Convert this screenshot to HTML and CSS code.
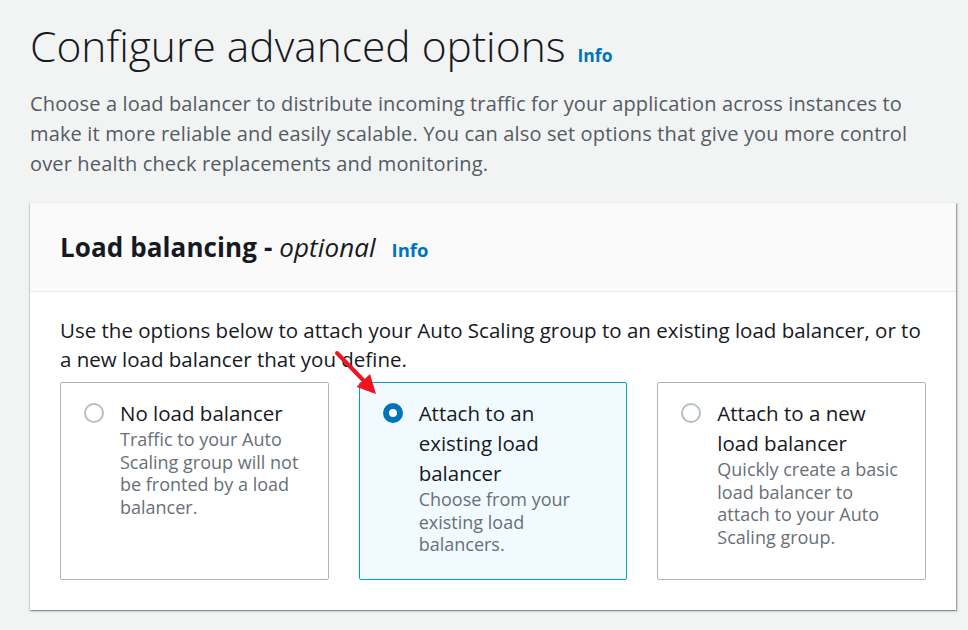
FILE: index.html
```html
<!DOCTYPE html>
<html>
<head>
<meta charset="utf-8">
<link rel="stylesheet" href="styles.css">
</head>
<body>
<div class="page">
  <h1 class="title">Configure advanced options <a class="info info-lg">Info</a></h1>
  <p class="lead">Choose a load balancer to distribute incoming traffic for your application across instances to make it more reliable and easily scalable. You can also set options that give you more control over health check replacements and monitoring.</p>
  <section class="card">
    <div class="card-head">
      <h2 class="card-title">Load balancing - <em>optional</em> <a class="info">Info</a></h2>
    </div>
    <div class="card-body">
      <p class="intro">Use the options below to attach your Auto Scaling group to an existing load balancer, or to a new load balancer that you define.</p>
      <div class="tiles">
        <div class="tile">
          <span class="radio"></span>
          <div class="tile-text">
            <div class="tile-label">No load balancer</div>
            <div class="tile-desc">Traffic to your Auto Scaling group will not be fronted by a load balancer.</div>
          </div>
        </div>
        <div class="tile tile-selected">
          <span class="radio radio-on"></span>
          <div class="tile-text">
            <div class="tile-label">Attach to an existing load balancer</div>
            <div class="tile-desc">Choose from your existing load balancers.</div>
          </div>
          <svg class="arrow" width="46" height="48" viewBox="0 0 46 48">
            <line x1="3" y1="3" x2="30" y2="31" stroke="#f0141e" stroke-width="4" stroke-linecap="round"/>
            <polygon points="42,44 22.5,37 36,24" fill="#f0141e"/>
          </svg>
        </div>
        <div class="tile">
          <span class="radio"></span>
          <div class="tile-text">
            <div class="tile-label">Attach to a new load balancer</div>
            <div class="tile-desc">Quickly create a basic load balancer to attach to your Auto Scaling group.</div>
          </div>
        </div>
      </div>
    </div>
  </section>
</div>
</body>
</html>
```
FILE: styles.css
```css
* { box-sizing: border-box; }
html, body { margin: 0; padding: 0; }
body {
  background: #f2f3f3;
  font-family: "Open Sans", "Noto Sans", sans-serif;
  color: #16191f;
  width: 968px;
  height: 630px;
  overflow: hidden;
}
.page {
  padding: 18px 13px 0 30px;
}
.title {
  margin: 0;
  font-size: 42.5px;
  font-weight: 300;
  line-height: 56px;
  letter-spacing: 0;
  color: #16191f;
}
.info {
  color: #0073bb;
  font-weight: 700;
  font-size: 17.5px;
  letter-spacing: 0;
}
.info-lg { margin-left: 1px; }
.lead {
  margin: 6px 0 0;
  font-size: 20px;
  line-height: 30px;
  letter-spacing: 0.15px;
  color: #545b64;
  width: 900px;
}
.card {
  margin-top: 24px;
  width: 926px;
  background: #fff;
  box-shadow: 1px 1px 1px 0 rgba(0,28,36,0.3), 1px 1px 2px 1px rgba(0,28,36,0.1), -1px 1px 1px 0 rgba(0,28,36,0.12);
}
.card-head {
  background: #fafafa;
  border-bottom: 1px solid #eaeded;
  height: 89px;
  padding: 26px 30px 0;
}
.card-title {
  margin: 0;
  font-size: 26px;
  font-weight: 700;
  line-height: 36px;
  letter-spacing: 0.1px;
}
.card-title em { font-weight: 400; }
.card-title .info { margin-left: 9px; font-size: 18.5px; }
.card-body {
  padding: 24px 30px 30px;
}
.intro {
  margin: 0;
  font-size: 20.5px;
  line-height: 29px;
}
.tiles {
  margin-top: 8px;
  display: grid;
  grid-template-columns: repeat(3, 1fr);
  column-gap: 30px;
}
.tile {
  position: relative;
  height: 198px;
  border: 1px solid #aab7b8;
  border-radius: 2px;
  display: flex;
  padding: 15px 21px 0 23px;
  gap: 16px;
}
.tile-selected {
  background: #f1faff;
  border-color: #00a1c9;
}
.radio {
  flex: none;
  width: 20px;
  height: 20px;
  margin-top: 5px;
  border: 2px solid #b6c0c1;
  border-radius: 50%;
  background: #fff;
}
.radio-on {
  border: 6px solid #0073bb;
}
.tile-label {
  font-size: 20.5px;
  line-height: 30px;
}
.tile-desc {
  font-size: 18px;
  line-height: 22.7px;
  color: #687078;
}
.arrow {
  position: absolute;
  left: -26px;
  top: -33px;
}
```
